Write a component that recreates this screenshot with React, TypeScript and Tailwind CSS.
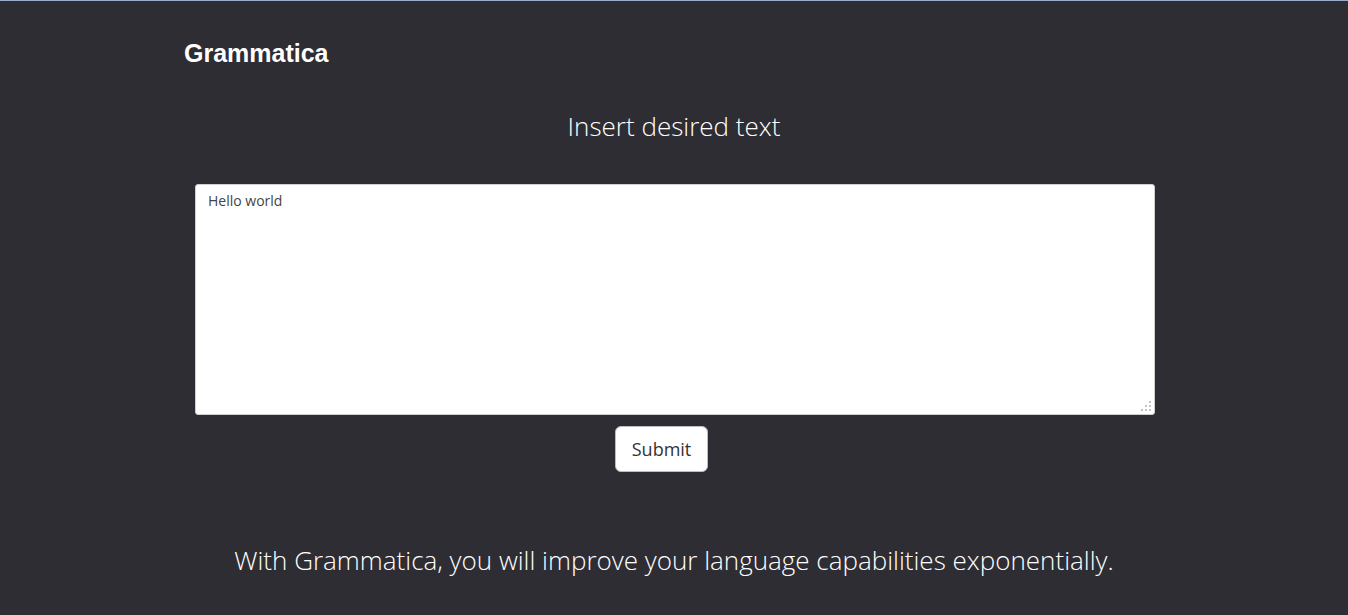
const App = () => {
    return (
        <div className="min-h-[615px] bg-[#2e2d33] border-t border-[#9aaccc] font-['Open_Sans',sans-serif]">
            <header className="pl-[184px] pt-[36px]">
                <h1 className="text-[25px] leading-[32px] font-bold text-white font-['Liberation_Sans',Arial,sans-serif]">
                    Grammatica
                </h1>
            </header>

            <main className="flex flex-col items-center">
                <h2 className="mt-[39px] text-[26px] leading-[36px] font-light text-white">
                    Insert desired text
                </h2>

                <div className="relative mt-[40px] ml-[2px]">
                    <textarea
                        defaultValue="Hello world"
                        className="block w-[960px] h-[231px] bg-white rounded-[3px] border border-[#cfcfcf] px-3 pt-[6px] text-[14px] leading-[20px] text-[#444] outline-none resize-none"
                    />
                    {/* resize grip */}
                    <svg className="absolute right-[3px] bottom-[3px]" width="12" height="12" viewBox="0 0 12 12">
                        <rect x="9" y="1" width="2" height="2" fill="#c4c4c4" />
                        <rect x="5" y="5" width="2" height="2" fill="#c4c4c4" />
                        <rect x="9" y="5" width="2" height="2" fill="#c4c4c4" />
                        <rect x="1" y="9" width="2" height="2" fill="#c4c4c4" />
                        <rect x="5" y="9" width="2" height="2" fill="#c4c4c4" />
                        <rect x="9" y="9" width="2" height="2" fill="#c4c4c4" />
                    </svg>
                </div>

                <button className="mt-[11px] mr-[25px] w-[93px] h-[46px] bg-white rounded-md border border-[#bdbdbd] text-[18px] text-[#333]">
                    Submit
                </button>

                <p className="mt-[70px] text-[26px] leading-[36px] font-light text-white">
                    With Grammatica, you will improve your language capabilities exponentially.
                </p>
            </main>
        </div>
    );
};

export default App;
